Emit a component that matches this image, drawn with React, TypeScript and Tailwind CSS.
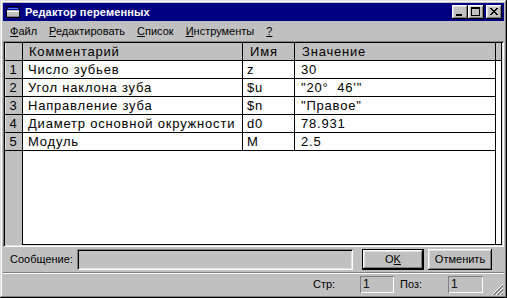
import React from 'react';

const raised = 'shadow-[inset_-1px_-1px_#000,inset_1px_1px_#fff,inset_-2px_-2px_#808080,inset_2px_2px_#dfdfdf]';
const sunken = 'shadow-[inset_1px_1px_#808080,inset_-1px_-1px_#fff,inset_2px_2px_#000,inset_-2px_-2px_#dfdfdf]';

const TitleButton = ({ kind }: { kind: 'min' | 'max' | 'close' }) => (
  <div className={`w-[16px] h-[14px] bg-[#c0c0c0] ${raised} flex items-center justify-center`}>
    <svg width="16" height="14" viewBox="0 0 16 14" shapeRendering="crispEdges">
      {kind === 'min' && <rect x="4" y="9" width="6" height="2" fill="#000" />}
      {kind === 'max' && (
        <g fill="#000">
          <rect x="3" y="2" width="9" height="2" />
          <rect x="3" y="4" width="1" height="7" />
          <rect x="11" y="4" width="1" height="7" />
          <rect x="3" y="10" width="9" height="1" />
        </g>
      )}
      {kind === 'close' && (
        <g fill="#000">
          {[0, 1, 2, 3, 4, 5, 6].map((i) => (
            <React.Fragment key={i}>
              <rect x={4 + i} y={3 + i} width="2" height="1" />
              <rect x={10 - i} y={3 + i} width="2" height="1" />
            </React.Fragment>
          ))}
        </g>
      )}
    </svg>
  </div>
);

const App = () => {
  const menu = [
    { key: 'Ф', rest: 'айл' },
    { key: 'Р', rest: 'едактировать' },
    { key: 'С', rest: 'писок' },
    { key: 'И', rest: 'нструменты' },
    { key: '?', rest: '' },
  ];

  const rows = [
    { comment: 'Число зубьев', name: 'z', value: '30' },
    { comment: 'Угол наклона зуба', name: '$u', value: '"20°  46\'"' },
    { comment: 'Направление зуба', name: '$n', value: '"Правое"' },
    { comment: 'Диаметр основной окружности', name: 'd0', value: '78.931' },
    { comment: 'Модуль', name: 'M', value: '2.5' },
  ];

  const cell = 'border-r border-b border-black flex items-center whitespace-pre overflow-hidden';
  const gridFont = 'text-[13px] tracking-[0.8px]';

  return (
    <div
      className={`w-[507px] h-[298px] bg-[#c0c0c0] p-[3px] flex flex-col text-black shadow-[inset_-1px_-1px_#000,inset_1px_1px_#dfdfdf,inset_-2px_-2px_#808080,inset_2px_2px_#fff]`}
      style={{ fontFamily: '"Liberation Sans", Arial, sans-serif' }}
    >
      {/* Title bar */}
      <div className="h-[18px] bg-[#000080] flex items-center pl-[2px] pr-[2px]">
        <svg width="14" height="12" viewBox="0 0 14 12" shapeRendering="crispEdges" className="ml-[1px]">
          <rect x="0" y="0" width="14" height="12" fill="#000" />
          <rect x="1" y="1" width="12" height="10" fill="#c0c0c0" />
          <rect x="1" y="1" width="12" height="3" fill="#0000a8" />
          <rect x="2" y="2" width="10" height="1" fill="#5a7edc" />
          <rect x="1" y="5" width="12" height="1" fill="#fff" />
          <rect x="1" y="10" width="12" height="1" fill="#808080" />
        </svg>
        <span className="ml-[5px] text-white font-bold text-[11px] tracking-[0.15px]">Редактор переменных</span>
        <div className="ml-auto flex">
          <TitleButton kind="min" />
          <TitleButton kind="max" />
          <div className="ml-[2px]">
            <TitleButton kind="close" />
          </div>
        </div>
      </div>

      {/* Menu */}
      <div className="h-[20px] flex items-center pl-[1px] text-[11px]">
        {menu.map((m) => (
          <span key={m.key} className="px-[6px]">
            <u>{m.key}</u>
            {m.rest}
          </span>
        ))}
      </div>

      {/* Grid */}
      <div className={`h-[206px] p-[2px] bg-white ${sunken}`}>
        <div className={`h-full grid grid-cols-[18px_220px_52px_201px_1fr] grid-rows-[18px_18px_18px_18px_18px_18px_1fr] ${gridFont}`}>
          <div className={`${cell} bg-[#c0c0c0] shadow-[inset_1px_0_#dfdfdf]`} />
          <div className={`${cell} bg-[#c0c0c0] pl-[6px]`}>Комментарий</div>
          <div className={`${cell} bg-[#c0c0c0] pl-[7px]`}>Имя</div>
          <div className={`${cell} bg-[#c0c0c0] pl-[7px]`}>Значение</div>
          <div className={`${cell} bg-[#c0c0c0]`} />
          {rows.map((r, i) => (
            <React.Fragment key={i}>
              <div className={`${cell} bg-[#c0c0c0] shadow-[inset_1px_0_#dfdfdf] justify-center`}>{i + 1}</div>
              <div className={`${cell} pl-[5px]`}>{r.comment}</div>
              <div className={`${cell} pl-[4px]`}>{r.name}</div>
              <div className={`${cell} pl-[6px]`}>{r.value}</div>
              <div className="border-r border-black" />
            </React.Fragment>
          ))}
          <div className="border-r border-black bg-[#c0c0c0]" />
          <div className="col-span-3 border-r border-b border-black" />
          <div className="border-r border-b border-black" />
        </div>
      </div>

      {/* Message row */}
      <div className="h-[25px] flex items-center text-[11px]">
        <span className="w-[74px] pl-[7px]">Сообщение:</span>
        <div className={`w-[276px] h-[21px] ${sunken}`} />
        <button className={`ml-[9px] w-[62px] h-[21px] bg-[#c0c0c0] border border-black ${raised} flex items-center justify-center`}>
          <span>
            O<u>K</u>
          </span>
        </button>
        <button className={`ml-[4px] w-[64px] h-[21px] bg-[#c0c0c0] ${raised} flex items-center justify-center`}>
          Отменить
        </button>
      </div>

      {/* Status bar */}
      <div className="h-[23px] border-t border-[#808080] shadow-[inset_0_1px_#fff] flex items-center text-[11px] relative">
        <span className="ml-[310px] w-[47px]">Стр:</span>
        <div className="w-[34px] h-[17px] shadow-[inset_1px_1px_#808080,inset_-1px_-1px_#fff] pl-[3px] flex items-center text-[12px]">1</div>
        <span className="w-[54px] pl-[6px]">Поз:</span>
        <div className="w-[35px] h-[17px] shadow-[inset_1px_1px_#808080,inset_-1px_-1px_#fff] pl-[3px] flex items-center text-[12px]">1</div>
        <svg width="12" height="12" viewBox="0 0 12 12" className="absolute right-[1px] bottom-0" shapeRendering="crispEdges">
          {[0, 4, 8].map((o) => (
            <React.Fragment key={o}>
              <line x1={o + 1} y1="12" x2="12" y2={o + 1} stroke="#fff" strokeWidth="1" />
              <line x1={o + 2} y1="12" x2="12" y2={o + 2} stroke="#808080" strokeWidth="1" />
              <line x1={o + 3} y1="12" x2="12" y2={o + 3} stroke="#808080" strokeWidth="1" />
            </React.Fragment>
          ))}
        </svg>
      </div>
    </div>
  );
};

export default App;
